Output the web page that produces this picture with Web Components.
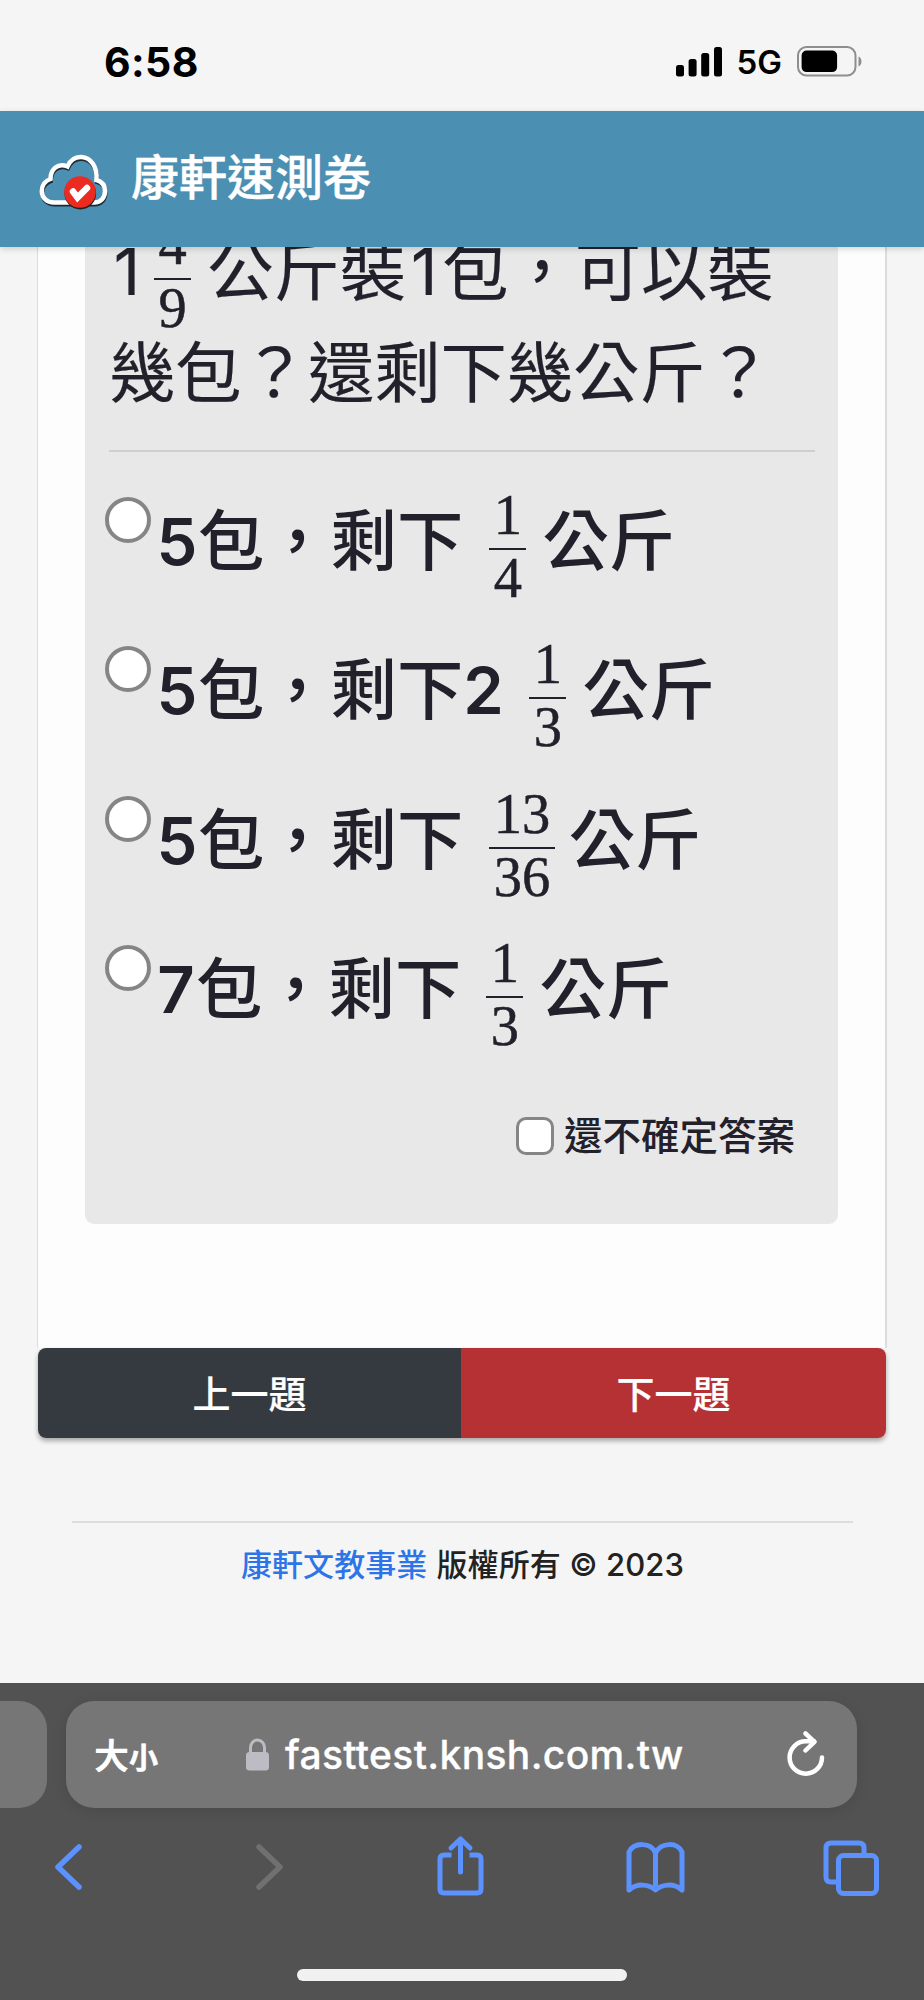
<!DOCTYPE html>
<html lang="zh-Hant">
<head>
<meta charset="utf-8">
<meta name="viewport" content="width=device-width">
<title>康軒速測卷</title>
<style>
  html, body { margin: 0; }
  body {
    width: 924px;
    height: 2000px;
    overflow: hidden;
    background: #f5f5f5;
    font-family: Inter, "Noto Sans CJK TC", sans-serif;
    color: #22202b;
  }
</style>
</head>
<body>
<phone-screen>
  <status-bar slot="status" time="6:58" network="5G"></status-bar>
  <site-header slot="header">康軒速測卷</site-header>
  <quiz-card>
    <div slot="question"><q-digit style="width:36px">1</q-digit><math-frac num="4" den="9" style="margin-left:9px;margin-right:16px"></math-frac>公斤裝<q-digit style="width:36px">1</q-digit>包，可以裝<br>幾包？還剩下幾公斤？</div>
    <quiz-option><q-digit>5</q-digit>包，剩下<math-frac num="1" den="4"></math-frac>公斤</quiz-option>
    <quiz-option><q-digit>5</q-digit>包，剩下<q-digit style="width:40px">2</q-digit><math-frac num="1" den="3"></math-frac>公斤</quiz-option>
    <quiz-option><q-digit>5</q-digit>包，剩下<math-frac num="13" den="36" style="margin-right:14px"></math-frac>公斤</quiz-option>
    <quiz-option><q-digit style="width:40px">7</q-digit>包，剩下<math-frac num="1" den="3" style="margin-left:25px"></math-frac>公斤</quiz-option>
    <unsure-check slot="unsure">還不確定答案</unsure-check>
  </quiz-card>
  <pager-buttons>
    <span slot="prev">上一題</span>
    <span slot="next">下一題</span>
  </pager-buttons>
  <site-footer><span slot="owner">康軒文教事業</span>版權所有 © 2023</site-footer>
  <browser-bar slot="browser" host="fasttest.knsh.com.tw"></browser-bar>
</phone-screen>

<script>
  // Small base class: attach an open root and fill it with the element's markup
  class BaseElement extends HTMLElement {
    constructor() {
      super();
      this.attachShadow({ mode: 'open' });
    }

    connectedCallback() {
      this.shadowRoot.innerHTML = this.render();
    }
  }

  class PhoneScreen extends BaseElement {
    render() {
      return `
        <style>
          :host {
            display: grid;
            grid-template-rows: 111px 136px 1436px 317px;
            width: 924px;
            height: 2000px;
          }
          main { min-height: 0; overflow: hidden; padding: 0 37px; }
        </style>
        <slot name="status"></slot>
        <slot name="header"></slot>
        <main><slot></slot></main>
        <slot name="browser"></slot>
      `;
    }
  }
  customElements.define('phone-screen', PhoneScreen);

  class StatusBar extends BaseElement {
    render() {
      return `
        <style>
          :host {
            display: flex;
            align-items: center;
            justify-content: space-between;
            box-sizing: border-box;
            padding: 12px 61px 0 104px;
            color: #000;
          }
          .time { font-size: 41px; font-weight: 700; letter-spacing: 0.4px; }
          .right { display: flex; align-items: center; }
          .net { font-size: 33px; font-weight: 600; margin: 0 15px 0 15px; }
          svg { display: block; }
        </style>
        <span class="time">${this.getAttribute('time')}</span>
        <div class="right">
          <svg width="46" height="30" viewBox="0 0 46 30">
            <rect x="0" y="18" width="8" height="11.5" rx="2.5"/>
            <rect x="12.6" y="12" width="8" height="17.5" rx="2.5"/>
            <rect x="25.2" y="6" width="8" height="23.5" rx="2.5"/>
            <rect x="38" y="0" width="8" height="29.5" rx="2.5"/>
          </svg>
          <span class="net">${this.getAttribute('network')}</span>
          <svg width="66" height="31" viewBox="0 0 66 31">
            <rect x="1" y="1" width="57.5" height="28.5" rx="8.5" fill="none" stroke="#8e8e8e" stroke-width="2"/>
            <rect x="4.6" y="4.6" width="35.5" height="21.5" rx="5" fill="#000"/>
            <path d="M61.5 10.5c4 1.7 4 8.3 0 10z" fill="#8e8e8e"/>
          </svg>
        </div>
      `;
    }
  }
  customElements.define('status-bar', StatusBar);

  class SiteHeader extends BaseElement {
    render() {
      return `
        <style>
          :host {
            display: flex;
            align-items: center;
            box-sizing: border-box;
            padding: 0 0 10px 39px;
            background: #4b8fb3;
            color: #fff;
            font-size: 48px;
            font-weight: 500;
            -webkit-text-stroke: 0.4px #fff;
            z-index: 1;
            box-shadow: 0 2px 6px rgba(0, 0, 0, 0.16);
          }
          svg { margin: 16px 23px 0 0; }
        </style>
        <svg width="69" height="56" viewBox="0 0 69 56">
          <path d="M15 48.5H55C62 48.5 66 43.5 66 37C66 31 62.5 27.5 57.5 26C58.5 13 52 3.5 42.5 3C35.5 2.7 31 6.5 28.5 12.5C19 8.5 11.5 15 11.5 25C6 27 2.8 31.5 2.8 37C2.8 44 8 48.5 15 48.5Z" transform="translate(0.5 2)" fill="none" stroke="#1d2b33" stroke-width="4"/>
          <path d="M15 48.5H55C62 48.5 66 43.5 66 37C66 31 62.5 27.5 57.5 26C58.5 13 52 3.5 42.5 3C35.5 2.7 31 6.5 28.5 12.5C19 8.5 11.5 15 11.5 25C6 27 2.8 31.5 2.8 37C2.8 44 8 48.5 15 48.5Z" fill="none" stroke="#fff" stroke-width="4.5"/>
          <circle cx="41.3" cy="39.6" r="15.8" fill="#222"/>
          <circle cx="41" cy="38" r="15.8" fill="#ec2b20"/>
          <path d="M34 37.5L38.5 43.5L48 34" fill="none" stroke="#fff" stroke-width="6.5" stroke-linecap="round"/>
        </svg>
        <slot></slot>
      `;
    }
  }
  customElements.define('site-header', SiteHeader);

  // A latin digit with its own advance width inside CJK text
  class QDigit extends BaseElement {
    render() {
      return `
        <style>
          :host { display: inline-block; width: 42px; text-align: center; font-size: 65px; line-height: 1; }
        </style>
        <slot></slot>
      `;
    }
  }
  customElements.define('q-digit', QDigit);

  class MathFrac extends BaseElement {
    render() {
      // Negative block margins keep the fraction from stretching its line
      return `
        <style>
          :host {
            display: inline-flex;
            flex-direction: column;
            align-items: stretch;
            vertical-align: 31px;
            margin: -30px 16px -30px 26px;
            font-family: "Liberation Serif", serif;
            font-size: 56.5px;
            font-weight: 400;
            line-height: 40px;
            text-align: center;
            -webkit-text-stroke: 0.5px currentColor;
          }
          span { padding: 0 4.5px; }
          .num { padding-bottom: 13px; }
          .den { border-top: 2.5px solid currentColor; padding-top: 8px; }
        </style>
        <span class="num">${this.getAttribute('num')}</span>
        <span class="den">${this.getAttribute('den')}</span>
      `;
    }
  }
  customElements.define('math-frac', MathFrac);

  class QuizCard extends BaseElement {
    render() {
      return `
        <style>
          :host {
            display: block;
            box-sizing: border-box;
            height: 1101px;
            padding: 0 47px;
            background: #fdfdfd;
            border: solid #dcdcdc;
            border-width: 0 2px 0 1px;
          }
          .panel {
            display: flex;
            flex-direction: column;
            box-sizing: border-box;
            height: 977px;
            padding: 0 23px 0 24px;
            background: #e8e8e8;
            border-radius: 0 0 9px 9px;
          }
          .question {
            height: 203px;
            border-bottom: 2px solid #cfcfcf;
            font-size: 66.3px;
            line-height: 102px;
            white-space: nowrap;
            -webkit-text-stroke: 0.2px currentColor;
          }
          .question ::slotted(div) { margin-top: -27px; }
          .options { display: grid; grid-auto-rows: 149.3px; margin-top: 16px; }
          .unsure { display: flex; justify-content: flex-end; padding: 47px 20px 0 0; }
        </style>
        <div class="panel">
          <div class="question"><slot name="question"></slot></div>
          <div class="options"><slot></slot></div>
          <div class="unsure"><slot name="unsure"></slot></div>
        </div>
      `;
    }
  }
  customElements.define('quiz-card', QuizCard);

  class QuizOption extends BaseElement {
    render() {
      return `
        <style>
          :host {
            display: flex;
            align-items: flex-start;
            margin-left: -4px;
            font-size: 66.3px;
            font-weight: 500;
            line-height: 146px;
            white-space: nowrap;
          }
          i {
            flex: none;
            box-sizing: border-box;
            width: 46px;
            height: 46px;
            margin: 29px 5px 0 0;
            border: 4px solid #858585;
            border-radius: 50%;
            background: #fff;
          }
          ::slotted(q-digit) { font-weight: 600; }
        </style>
        <i></i><span><slot></slot></span>
      `;
    }
  }
  customElements.define('quiz-option', QuizOption);

  class UnsureCheck extends BaseElement {
    render() {
      return `
        <style>
          :host {
            display: flex;
            align-items: center;
            gap: 10px;
            margin-top: 1px;
            font-size: 38.5px;
            font-weight: 500;
            line-height: 46px;
          }
          i {
            box-sizing: border-box;
            width: 38px;
            height: 38px;
            border: 3px solid #858585;
            border-radius: 10px;
            background: #fff;
          }
        </style>
        <i></i><slot></slot>
      `;
    }
  }
  customElements.define('unsure-check', UnsureCheck);

  class PagerButtons extends BaseElement {
    render() {
      return `
        <style>
          :host {
            display: grid;
            grid-template-columns: 423px 1fr;
            height: 90px;
            margin: 0 1px;
            border-radius: 8px;
            overflow: hidden;
            box-shadow: 0 3px 5px rgba(0, 0, 0, 0.32);
            color: #fff;
            font-size: 38px;
            font-weight: 500;
            -webkit-text-stroke: 0.2px #fff;
          }
          div { display: flex; align-items: center; justify-content: center; padding-bottom: 4px; background: #343a40; }
          .next { background: #b63134; }
        </style>
        <div><slot name="prev"></slot></div>
        <div class="next"><slot name="next"></slot></div>
      `;
    }
  }
  customElements.define('pager-buttons', PagerButtons);

  class SiteFooter extends BaseElement {
    render() {
      return `
        <style>
          :host {
            display: block;
            margin: 83px 34px 0 35px;
            padding-top: 19px;
            border-top: 2px solid #dedede;
            color: #222;
            font-size: 31px;
            font-weight: 500;
            line-height: 46px;
            text-align: center;
            letter-spacing: 0.1px;
          }
          ::slotted([slot="owner"]) { color: #2d74e8; margin-right: 9px; }
        </style>
        <slot name="owner"></slot><slot></slot>
      `;
    }
  }
  customElements.define('site-footer', SiteFooter);

  class BrowserBar extends BaseElement {
    render() {
      return `
        <style>
          :host {
            display: flex;
            flex-direction: column;
            box-sizing: border-box;
            padding-top: 18px;
            background: #525252;
            z-index: 1;
          }
          .tabs { display: grid; grid-template-columns: 47px 791px; gap: 19px; height: 107px; }
          .prev { background: #767676; border-radius: 0 28px 28px 0; }
          .address {
            display: flex;
            align-items: center;
            box-sizing: border-box;
            padding: 0 31px 0 28px;
            background: #767676;
            border-radius: 28px;
            box-shadow: 0 3px 14px rgba(0, 0, 0, 0.1);
            color: #fff;
          }
          .size { font-size: 35px; font-weight: 700; width: 151px; white-space: nowrap; margin-top: -3px; }
          .size small { font-size: 29px; -webkit-text-stroke: 0.6px #fff; }
          .host { flex: 1; margin-left: 15px; font-size: 39px; font-weight: 500; letter-spacing: 0.35px; -webkit-text-stroke: 0.3px #fff; }
          .tools { display: flex; align-items: flex-start; height: 68px; padding: 24px 0 0 51px; color: #5b92ff; }
          .forward { margin: 0 149px 0 164px; color: #707070; }
          .book { margin: 0 134px 0 139px; }
          .home { width: 330px; height: 12px; margin: 69px auto 0; border-radius: 6px; background: #f1f1f1; }
          svg { display: block; flex: none; fill: none; stroke: currentColor; stroke-linecap: round; stroke-linejoin: round; }
        </style>
        <div class="tabs">
          <div class="prev"></div>
          <div class="address">
            <span class="size">大<small>小</small></span>
            <svg width="25" height="33" viewBox="0 0 25 33" style="color:#bdbcc4">
              <path d="M5.5 15V9.5a7 7.5 0 0 1 14 0V15" stroke-width="3"/>
              <rect x="1" y="14" width="23" height="18.5" rx="3.5" fill="currentColor" stroke="none"/>
            </svg>
            <span class="host">${this.getAttribute('host')}</span>
            <svg width="40" height="48" viewBox="0 0 40 48" stroke-width="4.5">
              <path d="M36 26.5A16.2 16.2 0 1 1 19.8 10.3H28"/>
              <path d="M19.5 2.5L28.5 10.8L19.5 19.5"/>
            </svg>
          </div>
        </div>
        <div class="tools">
          <svg width="36" height="68" viewBox="0 0 36 68" stroke-width="5.5"><path d="M28 15L7 35L28 55"/></svg>
          <svg class="forward" width="36" height="68" viewBox="0 0 36 68" stroke-width="5.5"><path d="M8 15L29 35L8 55"/></svg>
          <svg width="50" height="68" viewBox="0 0 50 68" stroke-width="5"><path d="M15.5 23H8Q4 23 4 27V57Q4 61 8 61H41Q45 61 45 57V27Q45 23 41 23H33.500" stroke-linecap="butt"/><path d="M24.500 40V7M15 16L24.500 7L34 16"/></svg>
          <svg class="book" width="62" height="68" viewBox="0 0 62 68" stroke-width="5"><path d="M30.500 21C26 10 9 10 4 20V58C12 51 24 52 30.500 58C37 52 49 51 57 58V20C53 10 36 10 30.500 21V57"/></svg>
          <svg width="60" height="68" viewBox="0 0 60 68" stroke-width="5"><path d="M16 50H10Q5 50 5 45V16Q5 11 10 11H38Q43 11 43 16V22"/><rect x="17.500" y="23.500" width="38" height="38" rx="5"/></svg>
        </div>
        <div class="home"></div>
      `;
    }
  }
  customElements.define('browser-bar', BrowserBar);
</script>
</body>
</html>
